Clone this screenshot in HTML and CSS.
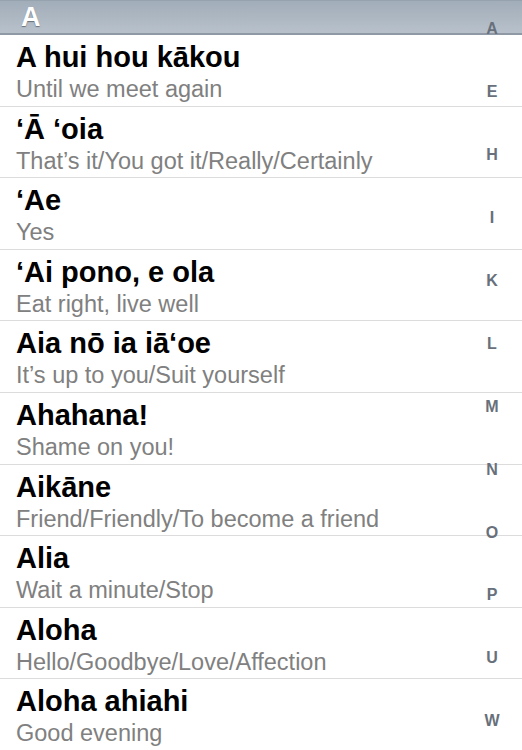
FILE: index.html
```html
<!DOCTYPE html>
<html lang="en">
<head>
  <meta charset="UTF-8">
  <meta name="viewport" content="width=device-width, initial-scale=1.0">
  <title>Hawaiian Phrases</title>
  <link rel="stylesheet" href="styles.css">
</head>
<body>
  <div class="phrase-table">
    <div class="section-header">A</div>
    <ul class="phrase-list">
      <li class="phrase-item">
        <p class="phrase-title">A hui hou kākou</p>
        <p class="phrase-meaning">Until we meet again</p>
      </li>
      <li class="phrase-item">
        <p class="phrase-title">‘Ā ‘oia</p>
        <p class="phrase-meaning">That’s it/You got it/Really/Certainly</p>
      </li>
      <li class="phrase-item">
        <p class="phrase-title">‘Ae</p>
        <p class="phrase-meaning">Yes</p>
      </li>
      <li class="phrase-item">
        <p class="phrase-title">‘Ai pono, e ola</p>
        <p class="phrase-meaning">Eat right, live well</p>
      </li>
      <li class="phrase-item">
        <p class="phrase-title">Aia nō ia iā‘oe</p>
        <p class="phrase-meaning">It’s up to you/Suit yourself</p>
      </li>
      <li class="phrase-item">
        <p class="phrase-title">Ahahana!</p>
        <p class="phrase-meaning">Shame on you!</p>
      </li>
      <li class="phrase-item">
        <p class="phrase-title">Aikāne</p>
        <p class="phrase-meaning">Friend/Friendly/To become a friend</p>
      </li>
      <li class="phrase-item">
        <p class="phrase-title">Alia</p>
        <p class="phrase-meaning">Wait a minute/Stop</p>
      </li>
      <li class="phrase-item">
        <p class="phrase-title">Aloha</p>
        <p class="phrase-meaning">Hello/Goodbye/Love/Affection</p>
      </li>
      <li class="phrase-item">
        <p class="phrase-title">Aloha ahiahi</p>
        <p class="phrase-meaning">Good evening</p>
      </li>
    </ul>

    <!-- section index, floats over the list -->
    <ul class="index-list">
      <li class="index-item">A</li>
      <li class="index-item">E</li>
      <li class="index-item">H</li>
      <li class="index-item">I</li>
      <li class="index-item">K</li>
      <li class="index-item">L</li>
      <li class="index-item">M</li>
      <li class="index-item">N</li>
      <li class="index-item">O</li>
      <li class="index-item">P</li>
      <li class="index-item">U</li>
      <li class="index-item">W</li>
    </ul>
  </div>
</body>
</html>
```

FILE: styles.css
```css
* {
  margin: 0;
  padding: 0;
  box-sizing: border-box;
}

body {
  background-color: #fff;
  font-family: "Liberation Sans", Arial, sans-serif;
}

.phrase-table {
  position: relative;
  width: 522px;
  height: 750px;
  overflow: hidden;
}

.section-header {
  height: 35px;
  padding-left: 21px;
  font-size: 27px;
  font-weight: bold;
  line-height: 33px;
  color: #fff;
  text-shadow: 0 1px 1px rgba(40,50,60,.55);
  background: linear-gradient(#a1adb9, #b8c1cb);
  border-top: 1px solid #96a2ae;
  border-bottom: 2px solid #8e99a5;
}

.phrase-list {
  list-style-type: none;
}

.phrase-item {
  height: 71.6px;
  padding: 7px 0 0 16px;
  border-bottom: 1px solid #dcdcdc;
}

.phrase-title {
  font-size: 29px;
  font-weight: bold;
  line-height: 30px;
  color: #000;
  white-space: nowrap;
}

.phrase-meaning {
  margin-top: 4px;
  font-size: 23.5px;
  line-height: 26px;
  color: #808080;
  white-space: nowrap;
}

.index-list {
  position: absolute;
  top: -2px;
  right: 0;
  width: 60px;
  list-style-type: none;
}

.index-item {
  display: flex;
  align-items: center;
  justify-content: center;
  height: 62.9px;
  font-size: 16px;
  font-weight: bold;
  color: #68707b;
}
```
